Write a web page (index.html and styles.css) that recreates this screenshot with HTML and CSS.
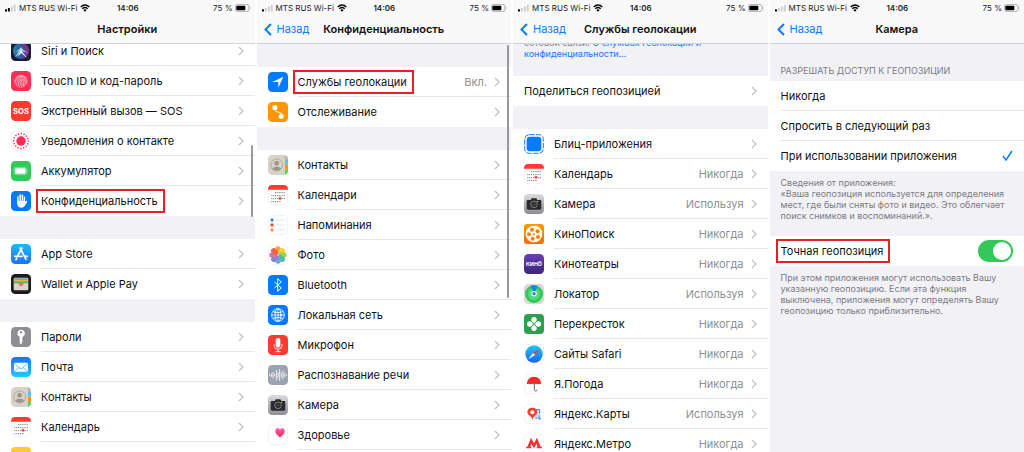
FILE: index.html
```
<!DOCTYPE html>
<html lang="ru">
<head>
  <meta charset="UTF-8">
  <meta name="viewport" content="width=device-width, initial-scale=1.0">
  <title>Службы геолокации</title>
  <link rel="stylesheet" href="styles.css">
</head>
<body>
  <svg class="sprite" aria-hidden="true">
    <defs>
      <linearGradient id="g-blue" x1="0" y1="0" x2="0" y2="1"><stop offset="0" stop-color="#1e6ff2"/><stop offset="1" stop-color="#19d0fb"/></linearGradient>
      <linearGradient id="g-store" x1="0" y1="0" x2="0" y2="1"><stop offset="0" stop-color="#19bdfb"/><stop offset="1" stop-color="#1d72f1"/></linearGradient>
      <linearGradient id="g-grey" x1="0" y1="0" x2="0" y2="1"><stop offset="0" stop-color="#dcdce0"/><stop offset="1" stop-color="#8d8d92"/></linearGradient>
      <linearGradient id="g-orange" x1="0" y1="0" x2="0" y2="1"><stop offset="0" stop-color="#ff9a00"/><stop offset="1" stop-color="#ff6a0a"/></linearGradient>
      <linearGradient id="g-violet" x1="0" y1="0" x2="0" y2="1"><stop offset="0" stop-color="#6a3fb5"/><stop offset="1" stop-color="#3f2378"/></linearGradient>
      <linearGradient id="g-heart" x1="0" y1="0" x2="0" y2="1"><stop offset="0" stop-color="#fb5aa8"/><stop offset="1" stop-color="#fb2a55"/></linearGradient>
      <linearGradient id="g-safari" x1="0" y1="0" x2="0" y2="1"><stop offset="0" stop-color="#1fc8fb"/><stop offset="1" stop-color="#1b63ea"/></linearGradient>
      <linearGradient id="g-siri" x1="0" y1="0" x2="1" y2="0"><stop offset="0" stop-color="#2ec4d8"/><stop offset=".5" stop-color="#4a6be0"/><stop offset="1" stop-color="#d43a9a"/></linearGradient>
      <clipPath id="tile"><rect width="60" height="60" rx="13"/></clipPath>
    </defs>

    <symbol id="chevron" viewBox="0 0 6 10"><path d="M1 1l4 4-4 4" fill="none" stroke="#c4c4c7" stroke-width="1.4"/></symbol>
    <symbol id="back" viewBox="0 0 8 13"><path d="M7 1L1.500 6.500 7 12" fill="none" stroke="#0a7aff" stroke-width="2"/></symbol>
    <symbol id="check" viewBox="0 0 11 11"><path d="M1 6l3 4 6-9" fill="none" stroke="#0a7aff" stroke-width="1.500"/></symbol>

    <symbol id="signal-2" viewBox="0 0 34 24">
      <rect y="16" width="6" height="7" rx="1"/><rect x="9" y="12" width="6" height="11" rx="1"/>
      <g fill="#cfcfd2"><rect x="18" y="7" width="6" height="16" rx="1"/><rect x="27" y="2" width="6" height="21" rx="1"/></g>
    </symbol>
    <symbol id="signal-1" viewBox="0 0 34 24">
      <rect y="16" width="6" height="7" rx="1"/>
      <g fill="#cfcfd2"><rect x="9" y="12" width="6" height="11" rx="1"/><rect x="18" y="7" width="6" height="16" rx="1"/><rect x="27" y="2" width="6" height="21" rx="1"/></g>
    </symbol>
    <symbol id="wifi" viewBox="0 0 30 24">
      <g fill="none" stroke="#000" stroke-width="4"><path d="M2 9q13-12 26 0M7 14q8-7 16 0"/></g><path d="M10 18q5-4 10 0l-5 5z"/>
    </symbol>
    <symbol id="battery" viewBox="0 0 48 24">
      <rect x="1" y="2" width="41" height="20" rx="5" fill="none" stroke="#8e8e93" stroke-width="2"/>
      <rect x="4" y="5" width="27" height="14" rx="3"/><path d="M44 8q4 4 0 8z" fill="#8e8e93"/>
    </symbol>

    <symbol id="siri" viewBox="0 0 60 60">
      <rect width="60" height="60" rx="13" fill="#1b1c3a"/>
      <circle cx="30" cy="30" r="24" fill="url(#g-siri)" opacity=".65"/>
      <path d="M7 34q14-3 23-16 9 14 23 17-14-1-23-4-7 10-18 18 7-10 10-18-7 0-15 3z" fill="#8ff0ee" opacity=".8"/>
      <path d="M30 20l3 11 15 20-17-14-12 10 8-14z" fill="#fff" opacity=".85"/>
    </symbol>
    <symbol id="touch" viewBox="0 0 60 60">
      <rect width="60" height="60" rx="13" fill="#ff2d55"/>
      <g fill="none" stroke="#fff" stroke-width="2" stroke-linecap="round" opacity=".85">
        <path d="M15 20q15-15 30 0M11 29q3-12 19-13 16 1 19 14M12 37q0-16 18-17 16 1 18 17M16 43q3-5 2-9 1-9 12-10 12 1 13 11 0 6-2 10M20 47q4-7 3-12 1-7 7-7 7 0 8 7 1 7-2 13M25 49q4-8 3-13 0-4 2-4 3 0 3 4 0 7-2 14"/>
      </g>
    </symbol>
    <symbol id="sos" viewBox="0 0 60 60">
      <rect width="60" height="60" rx="13" fill="#ff3b30"/>
      <text x="30" y="39" class="glyph-text glyph-sos">SOS</text>
    </symbol>
    <symbol id="exposure" viewBox="0 0 60 60">
      <rect x="1" y="1" width="58" height="58" rx="13" fill="#fff" stroke="#e9e9ec" stroke-width="2"/>
      <circle cx="30" cy="30" r="14" fill="#ff2d55"/>
      <circle cx="30" cy="30" r="22" fill="none" stroke="#ff2d55" stroke-width="5" stroke-linecap="round" stroke-dasharray="0 8.640"/>
    </symbol>
    <symbol id="accumulator" viewBox="0 0 60 60">
      <rect width="60" height="60" rx="13" fill="#34c759"/>
      <rect x="9" y="19" width="38" height="22" rx="6" fill="none" stroke="#a9e8b9" stroke-width="2"/>
      <rect x="12" y="22" width="32" height="16" rx="3" fill="#fff"/><path d="M49 26q5 4 0 8z" fill="#a9e8b9"/>
    </symbol>
    <symbol id="hand" viewBox="0 0 60 60">
      <rect width="60" height="60" rx="13" fill="#007aff"/>
      <g fill="none" stroke="#fff" stroke-width="5" stroke-linecap="round"><path d="M21 35V18M27.500 32V12M34 32V13M40 34V19M40 42l6-10"/></g>
      <path d="M18.500 29h24v9q-1 12-12 12-12 0-12-13z" fill="#fff"/>
      <path d="M24.300 18v12M30.800 14v16M37 18v12" stroke="#007aff" stroke-width="1.500"/>
    </symbol>
    <symbol id="appstore" viewBox="0 0 60 60">
      <rect width="60" height="60" rx="13" fill="url(#g-store)"/>
      <g fill="none" stroke="#fff" stroke-width="5" stroke-linecap="round"><path d="M33 12L20 35M27 12l18 34M11 37h22M42 37h7M17 43l-2 4"/></g>
    </symbol>
    <symbol id="wallet" viewBox="0 0 60 60">
      <rect width="60" height="60" rx="13" fill="#1c1c1e"/>
      <rect x="8" y="11" width="44" height="38" rx="4" fill="#d9d5c8"/>
      <path d="M10 13h40v5H10z" fill="#4b9ed0"/><path d="M9 17h42v6H9z" fill="#e6b73a"/><path d="M9 22h42v6H9z" fill="#58b36a"/>
      <path d="M22 28h16v3q-2 0-3 3-5 6-10 0-1-3-3-3z" fill="#ee6a5c"/>
    </symbol>
    <symbol id="key" viewBox="0 0 60 60">
      <rect width="60" height="60" rx="13" fill="#8e8e93"/>
      <path fill="#fff" fill-rule="evenodd" d="M30 8a11 11 0 0 1 5 21v4l-3 3 4 4-4 4 2 3-5 5-3-4V29A11 11 0 0 1 30 8zm0 4a3 3 0 1 0 0 7 3 3 0 0 0 0-7z"/>
    </symbol>
    <symbol id="mail" viewBox="0 0 60 60">
      <rect width="60" height="60" rx="13" fill="url(#g-blue)"/>
      <rect x="9" y="17" width="42" height="27" rx="4" fill="#fff"/>
      <path d="M10 19l17 15q3 2 6 0l17-15M10 43l15-12M50 43L35 31" fill="none" stroke="#1f9bf6" stroke-width="2"/>
    </symbol>
    <symbol id="contacts" viewBox="0 0 60 60">
      <g clip-path="url(#tile)">
        <rect width="60" height="60" fill="#d6d2c6"/>
        <path d="M51 0h9v15h-9z" fill="#b9b6ab"/><path d="M51 15h9v14h-9z" fill="#5ac1fa"/><path d="M51 29h9v15h-9z" fill="#ff9500"/><path d="M51 44h9v16h-9z" fill="#4cd964"/>
      </g>
      <circle cx="26" cy="30" r="18" fill="none" stroke="#9b978d" stroke-width="2"/>
      <circle cx="26" cy="25" r="7" fill="#9b978d"/><path d="M13 42q2-7 13-7t13 7q-13 11-26 0z" fill="#9b978d"/>
    </symbol>
    <symbol id="calendar" viewBox="0 0 60 60">
      <rect x="1" y="1" width="58" height="58" rx="13" fill="#fff" stroke="#ececef" stroke-width="2"/>
      <path d="M0 14v-1Q0 0 13 0h34q13 0 13 13v1z" fill="#ff3b30"/>
      <path d="M21 23h30M10 32h41M10 41h41M10 50h29" stroke="#555" stroke-width="2.500" stroke-dasharray="3 2.500"/>
      <circle cx="36" cy="40" r="4" fill="#ff3b30"/>
    </symbol>
    <symbol id="notes" viewBox="0 0 60 60">
      <rect width="60" height="60" rx="13" fill="#fff"/><path d="M0 18v-5Q0 0 13 0h34q13 0 13 13v5z" fill="#fccb2f"/>
    </symbol>

    <symbol id="location" viewBox="0 0 60 60">
      <rect width="60" height="60" rx="13" fill="#007aff"/><path d="M46 14L31 47V30H13z" fill="#fff"/>
    </symbol>
    <symbol id="tracking" viewBox="0 0 60 60">
      <rect width="60" height="60" rx="13" fill="#ff9500"/>
      <path d="M20 18l1 7q1 3 5 4l10 3q4 1 4 5v5" fill="none" stroke="#fff" stroke-width="3"/>
      <rect x="13" y="10" width="15" height="14" rx="5" fill="#fff"/><rect x="32" y="36" width="15" height="14" rx="5" fill="#fff"/>
    </symbol>
    <symbol id="reminders" viewBox="0 0 60 60">
      <rect x="1" y="1" width="58" height="58" rx="13" fill="#fff" stroke="#ececef" stroke-width="2"/>
      <circle cx="12" cy="15" r="5" fill="#1e88f7"/><circle cx="12" cy="30" r="5" fill="#f5463b"/><circle cx="12" cy="45" r="5" fill="#fd9a27"/>
      <path d="M23 15h30M23 30h30M23 45h30" stroke="#dcdce0" stroke-width="2"/>
    </symbol>
    <symbol id="photos" viewBox="0 0 60 60">
      <rect x="1" y="1" width="58" height="58" rx="13" fill="#fff" stroke="#ececef" stroke-width="2"/>
      <g opacity=".9">
        <rect x="22" y="4" width="16" height="24" rx="8" fill="#fb9a26"/>
        <rect x="22" y="4" width="16" height="24" rx="8" fill="#f2d313" transform="rotate(45 30 30)"/>
        <rect x="22" y="4" width="16" height="24" rx="8" fill="#9ccb3b" transform="rotate(90 30 30)"/>
        <rect x="22" y="4" width="16" height="24" rx="8" fill="#3fb98a" transform="rotate(135 30 30)"/>
        <rect x="22" y="4" width="16" height="24" rx="8" fill="#5d9fe0" transform="rotate(180 30 30)"/>
        <rect x="22" y="4" width="16" height="24" rx="8" fill="#8173c9" transform="rotate(225 30 30)"/>
        <rect x="22" y="4" width="16" height="24" rx="8" fill="#bf6bb0" transform="rotate(270 30 30)"/>
        <rect x="22" y="4" width="16" height="24" rx="8" fill="#ee5340" transform="rotate(315 30 30)"/>
      </g>
    </symbol>
    <symbol id="bluetooth" viewBox="0 0 60 60">
      <rect width="60" height="60" rx="13" fill="#007aff"/>
      <path d="M19 21l21 18-11 10V11l11 10-21 18" fill="none" stroke="#fff" stroke-width="3"/>
    </symbol>
    <symbol id="globe" viewBox="0 0 60 60">
      <rect width="60" height="60" rx="13" fill="#007aff"/>
      <g fill="none" stroke="#fff" stroke-width="2.500"><circle cx="30" cy="30" r="19"/><ellipse cx="30" cy="30" rx="9" ry="19"/><path d="M30 11v38M11 30h38M15 20q15 7 30 0M15 40q15-7 30 0"/></g>
      <g fill="#fff"><circle cx="22" cy="22" r="3"/><circle cx="39" cy="30" r="3"/><circle cx="23" cy="38" r="3"/></g>
    </symbol>
    <symbol id="mic" viewBox="0 0 60 60">
      <rect width="60" height="60" rx="13" fill="#ff3b30"/>
      <rect x="23" y="9" width="14" height="29" rx="7" fill="#fff"/>
      <path d="M18 27v5q1 11 12 11t12-11v-5M30 43v7M22 50h16" fill="none" stroke="#fff" stroke-width="2.500"/>
    </symbol>
    <symbol id="speech" viewBox="0 0 60 60">
      <rect width="60" height="60" rx="13" fill="#9ba3b0"/>
      <path d="M5 29v3M10 26v9M15 22v17M20 28v5M25 16v29M30 22v17M35 13v34M40 24v12M45 18v24M50 25v10M55 29v3" stroke="#fff" stroke-width="2.500" stroke-linecap="round"/>
    </symbol>
    <symbol id="camera" viewBox="0 0 60 60">
      <rect width="60" height="60" rx="13" fill="url(#g-grey)"/>
      <path d="M11 18h9l3-5h14l3 5h9q3 0 3 3v22q0 4-4 4H12q-4 0-4-4V21q0-3 3-3z" fill="#2b2b2d"/>
      <circle cx="30" cy="31" r="10" fill="none" stroke="#a2a2a6" stroke-width="2"/><circle cx="30" cy="31" r="6" fill="#3c3c40"/><circle cx="41" cy="22" r="2" fill="#f5c518"/>
    </symbol>
    <symbol id="health" viewBox="0 0 60 60">
      <rect x="1" y="1" width="58" height="58" rx="13" fill="#fff" stroke="#e9e9ec" stroke-width="2"/>
      <path d="M36 37Q22 28 22 18q0-8 7-8 5 0 7 4 2-4 7-4 7 0 7 8 0 10-14 19z" fill="url(#g-heart)"/>
    </symbol>

    <symbol id="appclips" viewBox="0 0 60 60">
      <rect x="2" y="2" width="56" height="56" rx="14" fill="#fff" stroke="#0a7aff" stroke-width="3" stroke-dasharray="16 4"/>
      <rect x="8" y="8" width="44" height="44" rx="9" fill="#0a7aff"/>
    </symbol>
    <symbol id="kinopoisk" viewBox="0 0 60 60">
      <rect width="60" height="60" rx="10" fill="url(#g-orange)"/><circle cx="30" cy="30" r="25" fill="#fff"/>
      <g fill="#ff7d05"><circle cx="24" cy="17" r="6"/><circle cx="41" cy="22" r="6"/><circle cx="42" cy="39" r="6"/><circle cx="26" cy="44" r="6"/><circle cx="15" cy="31" r="6"/><circle cx="30" cy="31" r="3"/></g>
    </symbol>
    <symbol id="kino" viewBox="0 0 60 60">
      <rect width="60" height="60" rx="13" fill="url(#g-violet)"/>
      <text x="30" y="37" class="glyph-text glyph-kino">КИНО</text><path d="M44 23h8" stroke="#fff" stroke-width="2"/>
    </symbol>
    <symbol id="findmy" viewBox="0 0 60 60">
      <rect width="60" height="60" rx="13" fill="#d7d9d8"/><circle cx="30" cy="30" r="27" fill="#34c85a"/><circle cx="30" cy="30" r="18" fill="#55dc72"/>
      <path d="M19 6q11-5 22 0L31 30z" fill="#1a84e8"/><circle cx="30" cy="29" r="8" fill="#fff"/><circle cx="30" cy="29" r="5" fill="#157efb"/>
    </symbol>
    <symbol id="perek" viewBox="0 0 60 60">
      <rect width="60" height="60" rx="11" fill="#2f9e4f"/>
      <path d="M18 30h24M30 18v24" stroke="#fff" stroke-width="4"/>
      <g fill="#fff"><circle cx="30" cy="17" r="8"/><circle cx="43" cy="30" r="8"/><circle cx="30" cy="43" r="8"/><circle cx="17" cy="30" r="8"/></g>
      <path d="M30 26l4 4-4 4-4-4z" fill="#2f9e4f"/>
    </symbol>
    <symbol id="safari" viewBox="0 0 60 60">
      <rect x="1" y="1" width="58" height="58" rx="13" fill="#fff" stroke="#ececef" stroke-width="2"/>
      <circle cx="30" cy="30" r="26" fill="url(#g-safari)"/>
      <path d="M47 14L27 27l6 6z" fill="#ff3b30"/><path d="M13 46l20-13-6-6z" fill="#fff"/>
    </symbol>
    <symbol id="weather" viewBox="0 0 60 60">
      <rect x="1" y="1" width="58" height="58" rx="13" fill="#fff" stroke="#ececef" stroke-width="2"/>
      <path d="M31 25v22q0 4 4 4t4-4" fill="none" stroke="#4a4a4c" stroke-width="2.500"/>
      <path d="M8 31Q10 8 30 8t22 23q-5-4-10 0-6-4-12 0-6-4-12 0-5-4-10 0z" fill="#ee2b2b"/>
    </symbol>
    <symbol id="maps" viewBox="0 0 60 60">
      <rect x="1" y="1" width="58" height="58" rx="13" fill="#fff" stroke="#ececef" stroke-width="2"/>
      <path d="M34 16h13v10l3 3v16H38l-8-6z" fill="#cfe6fb"/><path d="M35 17h12v12M34 42h6M45 34v11h6" fill="none" stroke="#2f80ed" stroke-width="3"/>
      <path d="M26 48q-2-9-8-12-8-5-8-11 0-14 15-14t15 14q0 6-8 11-5 3-6 12z" fill="#f5402f"/><circle cx="25" cy="25" r="6" fill="#fff"/>
    </symbol>
    <symbol id="metro" viewBox="0 0 60 60">
      <rect x="1" y="1" width="58" height="58" rx="13" fill="#fff" stroke="#ececef" stroke-width="2"/>
      <path d="M21 11l9 17 9-17 11 27h4v5H38v-5h3l-3-9-8 14-8-14-3 9h3v5H6v-5h4z" fill="#ee3338"/>
    </symbol>
  </svg>

  <main class="screens">
    <section class="screen">
      <header class="topbar">
        <div class="status">
          <span class="carrier"><svg class="signal"><use href="#signal-2"/></svg>MTS RUS Wi-Fi<svg class="wifi"><use href="#wifi"/></svg></span>
          <time>14:06</time>
          <span class="charge">75 %<svg class="battery"><use href="#battery"/></svg></span>
        </div>
        <div class="nav"><h1>Настройки</h1></div>
      </header>
      <div class="content scrolled">
        <nav class="group">
          <a class="row" href="#"><svg class="icon"><use href="#siri"/></svg><span class="body"><span class="label">Siri и Поиск</span><svg class="chevron"><use href="#chevron"/></svg></span></a>
          <a class="row" href="#"><svg class="icon"><use href="#touch"/></svg><span class="body"><span class="label">Touch ID и код-пароль</span><svg class="chevron"><use href="#chevron"/></svg></span></a>
          <a class="row" href="#"><svg class="icon"><use href="#sos"/></svg><span class="body"><span class="label">Экстренный вызов — SOS</span><svg class="chevron"><use href="#chevron"/></svg></span></a>
          <a class="row" href="#"><svg class="icon"><use href="#exposure"/></svg><span class="body"><span class="label">Уведомления о контакте</span><svg class="chevron"><use href="#chevron"/></svg></span></a>
          <a class="row" href="#"><svg class="icon"><use href="#accumulator"/></svg><span class="body"><span class="label">Аккумулятор</span><svg class="chevron"><use href="#chevron"/></svg></span></a>
          <a class="row" href="#"><svg class="icon"><use href="#hand"/></svg><span class="body"><span class="label marked">Конфиденциальность</span><svg class="chevron"><use href="#chevron"/></svg></span></a>
        </nav>
        <nav class="group">
          <a class="row" href="#"><svg class="icon"><use href="#appstore"/></svg><span class="body"><span class="label">App Store</span><svg class="chevron"><use href="#chevron"/></svg></span></a>
          <a class="row" href="#"><svg class="icon"><use href="#wallet"/></svg><span class="body"><span class="label">Wallet и Apple Pay</span><svg class="chevron"><use href="#chevron"/></svg></span></a>
        </nav>
        <nav class="group">
          <a class="row" href="#"><svg class="icon"><use href="#key"/></svg><span class="body"><span class="label">Пароли</span><svg class="chevron"><use href="#chevron"/></svg></span></a>
          <a class="row" href="#"><svg class="icon"><use href="#mail"/></svg><span class="body"><span class="label">Почта</span><svg class="chevron"><use href="#chevron"/></svg></span></a>
          <a class="row" href="#"><svg class="icon"><use href="#contacts"/></svg><span class="body"><span class="label">Контакты</span><svg class="chevron"><use href="#chevron"/></svg></span></a>
          <a class="row" href="#"><svg class="icon"><use href="#calendar"/></svg><span class="body"><span class="label">Календарь</span><svg class="chevron"><use href="#chevron"/></svg></span></a>
          <a class="row" href="#"><svg class="icon"><use href="#notes"/></svg><span class="body"><span class="label">Заметки</span><svg class="chevron"><use href="#chevron"/></svg></span></a>
        </nav>
      </div>
      <div class="scrollbar scrollbar-middle"></div>
    </section>

    <section class="screen">
      <header class="topbar">
        <div class="status">
          <span class="carrier"><svg class="signal"><use href="#signal-1"/></svg>MTS RUS Wi-Fi<svg class="wifi"><use href="#wifi"/></svg></span>
          <time>14:06</time>
          <span class="charge">75 %<svg class="battery"><use href="#battery"/></svg></span>
        </div>
        <div class="nav"><button class="back" type="button"><svg><use href="#back"/></svg>Назад</button><h1>Конфиденциальность</h1></div>
      </header>
      <div class="content spaced">
        <nav class="group">
          <a class="row" href="#"><svg class="icon"><use href="#location"/></svg><span class="body"><span class="label marked">Службы геолокации</span><span class="value">Вкл.</span><svg class="chevron"><use href="#chevron"/></svg></span></a>
          <a class="row" href="#"><svg class="icon"><use href="#tracking"/></svg><span class="body"><span class="label">Отслеживание</span><svg class="chevron"><use href="#chevron"/></svg></span></a>
        </nav>
        <nav class="group">
          <a class="row" href="#"><svg class="icon"><use href="#contacts"/></svg><span class="body"><span class="label">Контакты</span><svg class="chevron"><use href="#chevron"/></svg></span></a>
          <a class="row" href="#"><svg class="icon"><use href="#calendar"/></svg><span class="body"><span class="label">Календари</span><svg class="chevron"><use href="#chevron"/></svg></span></a>
          <a class="row" href="#"><svg class="icon"><use href="#reminders"/></svg><span class="body"><span class="label">Напоминания</span><svg class="chevron"><use href="#chevron"/></svg></span></a>
          <a class="row" href="#"><svg class="icon"><use href="#photos"/></svg><span class="body"><span class="label">Фото</span><svg class="chevron"><use href="#chevron"/></svg></span></a>
          <a class="row" href="#"><svg class="icon"><use href="#bluetooth"/></svg><span class="body"><span class="label">Bluetooth</span><svg class="chevron"><use href="#chevron"/></svg></span></a>
          <a class="row" href="#"><svg class="icon"><use href="#globe"/></svg><span class="body"><span class="label">Локальная сеть</span><svg class="chevron"><use href="#chevron"/></svg></span></a>
          <a class="row" href="#"><svg class="icon"><use href="#mic"/></svg><span class="body"><span class="label">Микрофон</span><svg class="chevron"><use href="#chevron"/></svg></span></a>
          <a class="row" href="#"><svg class="icon"><use href="#speech"/></svg><span class="body"><span class="label">Распознавание речи</span><svg class="chevron"><use href="#chevron"/></svg></span></a>
          <a class="row" href="#"><svg class="icon"><use href="#camera"/></svg><span class="body"><span class="label">Камера</span><svg class="chevron"><use href="#chevron"/></svg></span></a>
          <a class="row" href="#"><svg class="icon"><use href="#health"/></svg><span class="body"><span class="label">Здоровье</span><svg class="chevron"><use href="#chevron"/></svg></span></a>
          <a class="row" href="#"><span class="body"></span></a>
        </nav>
      </div>
      <div class="scrollbar scrollbar-top"></div>
    </section>

    <section class="screen">
      <header class="topbar">
        <div class="status">
          <span class="carrier"><svg class="signal"><use href="#signal-1"/></svg>MTS RUS Wi-Fi<svg class="wifi"><use href="#wifi"/></svg></span>
          <time>14:06</time>
          <span class="charge">75 %<svg class="battery"><use href="#battery"/></svg></span>
        </div>
        <div class="nav"><button class="back" type="button"><svg><use href="#back"/></svg>Назад</button><h1>Службы геолокации</h1></div>
      </header>
      <div class="content scrolled">
        <p class="note note-cut">сотовой связи. <a href="#">О службах геолокации и<br>конфиденциальности…</a></p>
        <nav class="group">
          <a class="row" href="#"><span class="body"><span class="label">Поделиться геопозицией</span><svg class="chevron"><use href="#chevron"/></svg></span></a>
        </nav>
        <nav class="group">
          <a class="row" href="#"><svg class="icon"><use href="#appclips"/></svg><span class="body"><span class="label">Блиц-приложения</span><svg class="chevron"><use href="#chevron"/></svg></span></a>
          <a class="row" href="#"><svg class="icon"><use href="#calendar"/></svg><span class="body"><span class="label">Календарь</span><span class="value">Никогда</span><svg class="chevron"><use href="#chevron"/></svg></span></a>
          <a class="row" href="#"><svg class="icon"><use href="#camera"/></svg><span class="body"><span class="label">Камера</span><span class="value">Используя</span><svg class="chevron"><use href="#chevron"/></svg></span></a>
          <a class="row" href="#"><svg class="icon"><use href="#kinopoisk"/></svg><span class="body"><span class="label">КиноПоиск</span><span class="value">Никогда</span><svg class="chevron"><use href="#chevron"/></svg></span></a>
          <a class="row" href="#"><svg class="icon"><use href="#kino"/></svg><span class="body"><span class="label">Кинотеатры</span><span class="value">Никогда</span><svg class="chevron"><use href="#chevron"/></svg></span></a>
          <a class="row" href="#"><svg class="icon"><use href="#findmy"/></svg><span class="body"><span class="label">Локатор</span><span class="value">Используя</span><svg class="chevron"><use href="#chevron"/></svg></span></a>
          <a class="row" href="#"><svg class="icon"><use href="#perek"/></svg><span class="body"><span class="label">Перекресток</span><span class="value">Никогда</span><svg class="chevron"><use href="#chevron"/></svg></span></a>
          <a class="row" href="#"><svg class="icon"><use href="#safari"/></svg><span class="body"><span class="label">Сайты Safari</span><span class="value">Никогда</span><svg class="chevron"><use href="#chevron"/></svg></span></a>
          <a class="row" href="#"><svg class="icon"><use href="#weather"/></svg><span class="body"><span class="label">Я.Погода</span><span class="value">Никогда</span><svg class="chevron"><use href="#chevron"/></svg></span></a>
          <a class="row" href="#"><svg class="icon"><use href="#maps"/></svg><span class="body"><span class="label">Яндекс.Карты</span><span class="value">Используя</span><svg class="chevron"><use href="#chevron"/></svg></span></a>
          <a class="row" href="#"><svg class="icon"><use href="#metro"/></svg><span class="body"><span class="label">Яндекс.Метро</span><span class="value">Никогда</span><svg class="chevron"><use href="#chevron"/></svg></span></a>
        </nav>
      </div>
    </section>

    <section class="screen">
      <header class="topbar">
        <div class="status">
          <span class="carrier"><svg class="signal"><use href="#signal-1"/></svg>MTS RUS Wi-Fi<svg class="wifi"><use href="#wifi"/></svg></span>
          <time>14:06</time>
          <span class="charge">75 %<svg class="battery"><use href="#battery"/></svg></span>
        </div>
        <div class="nav"><button class="back" type="button"><svg><use href="#back"/></svg>Назад</button><h1>Камера</h1></div>
      </header>
      <div class="content">
        <h2 class="caption">РАЗРЕШАТЬ ДОСТУП К ГЕОПОЗИЦИИ</h2>
        <div class="group" role="radiogroup">
          <label class="row"><span class="body"><span class="label">Никогда</span><input class="choice" type="radio" name="access"><svg class="check"><use href="#check"/></svg></span></label>
          <label class="row"><span class="body"><span class="label">Спросить в следующий раз</span><input class="choice" type="radio" name="access"><svg class="check"><use href="#check"/></svg></span></label>
          <label class="row"><span class="body"><span class="label">При использовании приложения</span><input class="choice" type="radio" name="access" checked><svg class="check"><use href="#check"/></svg></span></label>
        </div>
        <p class="note">Сведения от приложения:<br>«Ваша геопозиция используется для определения мест, где были сняты фото и видео. Это облегчает поиск снимков и воспоминаний.».</p>
        <div class="group">
          <label class="row"><span class="body"><span class="label marked">Точная геопозиция</span><input class="switch" type="checkbox" checked></span></label>
        </div>
        <p class="note">При этом приложения могут использовать Вашу указанную геопозицию. Если эта функция выключена, приложения могут определять Вашу геопозицию только приблизительно.</p>
      </div>
    </section>
  </main>
</body>
</html>
```
FILE: styles.css
```
* {
  box-sizing: border-box;
}
body {
  margin: 0;
  background: #fff;
  color: #111;
  font-family: Inter, "Noto Sans", sans-serif;
  font-size: 11px;
}
.sprite {
  position: absolute;
  width: 0;
  height: 0;
}
.screens {
  display: grid;
  grid-template-columns: repeat(4, 1fr);
  gap: 2px;
  height: 100vh;
}
.screen {
  position: relative;
  display: flex;
  flex-direction: column;
  min-width: 0;
  overflow: hidden;
  background: #f1f1f6;
}

/* status bar and title */
.topbar {
  position: relative;
  z-index: 1;
  flex: none;
  background: #f9f9fa;
  border-bottom: 1px solid #d3d3d7;
}
.status {
  display: grid;
  grid-template-columns: 1fr auto 1fr;
  align-items: center;
  height: 15px;
  padding: 0 4px 0 5px;
  font-size: 8px;
  color: #222;
  white-space: nowrap;
}
.status time {
  font-weight: 600;
}
.carrier,
.charge {
  display: flex;
  align-items: center;
  gap: 3px;
}
.charge {
  justify-content: flex-end;
  gap: 2px;
}
.signal {
  width: 11px;
  height: 8px;
}
.wifi {
  width: 10px;
  height: 8px;
}
.battery {
  width: 16px;
  height: 8px;
}
.nav {
  display: grid;
  grid-template-columns: 1fr auto 1fr;
  align-items: center;
  height: 28px;
}
.nav h1 {
  grid-column: 2;
  margin: 0;
  font-size: 11px;
  font-weight: 600;
}
.back {
  display: flex;
  align-items: center;
  justify-self: start;
  gap: 5px;
  padding: 0 0 0 7px;
  border: 0;
  background: none;
  color: #0a7aff;
  font: inherit;
}
.back svg {
  width: 8px;
  height: 13px;
}

/* lists */
.content {
  display: flex;
  flex-direction: column;
}
.scrolled {
  margin-top: -8px;
}
.spaced {
  padding-top: 23px;
}
.group {
  background: #fff;
}
.group + .group {
  margin-top: 23px;
}
.row {
  display: flex;
  align-items: center;
  gap: 10px;
  height: 30px;
  padding-left: 11px;
  color: inherit;
  text-decoration: none;
}
.icon {
  flex: none;
  width: 20px;
  height: 20px;
}
.body {
  display: flex;
  flex: 1;
  align-items: center;
  height: 100%;
  padding-right: 11px;
  border-bottom: 1px solid #e7e7ea;
  white-space: nowrap;
}
.row:last-child .body {
  border-bottom-color: transparent;
}
.label {
  position: relative;
  margin-right: auto;
}
.marked::after {
  content: "";
  position: absolute;
  inset: -5px -7px -5px -5px;
  border: 2px solid #ee1c25;
}
.value {
  margin-right: 7px;
  color: #8e8e93;
}
.chevron {
  width: 6px;
  height: 10px;
}

/* texts between the groups */
.caption,
.note {
  margin: 0;
  padding: 6px 11px 15px;
  color: #7c7c82;
  font-size: 9px;
  font-weight: 400;
  line-height: 11px;
}
.caption {
  padding-top: 21px;
  padding-bottom: 5px;
}
.note a {
  color: #0a7aff;
  text-decoration: none;
}
.note-cut {
  padding-top: 1px;
  padding-bottom: 17px;
}

/* controls */
.choice {
  appearance: none;
  width: 0;
  height: 0;
  margin: 0;
}
.check {
  display: none;
  width: 11px;
  height: 11px;
}
.choice:checked + .check {
  display: block;
}
.switch {
  appearance: none;
  display: flex;
  justify-content: flex-end;
  width: 35px;
  height: 22px;
  margin: 0;
  padding: 2px;
  border-radius: 11px;
  background: #34c759;
}
.switch::before {
  content: "";
  width: 18px;
  height: 18px;
  border-radius: 50%;
  background: #fff;
}

/* lettering inside the icons */
.glyph-text {
  fill: #fff;
  font-weight: 700;
  text-anchor: middle;
}
.glyph-sos {
  font-size: 23px;
}
.glyph-kino {
  font-size: 16px;
}

.scrollbar {
  position: absolute;
  right: 2px;
  z-index: 2;
  width: 2px;
  border-radius: 1px;
  background: #98989d;
}
.scrollbar-middle {
  top: 32%;
  height: 16%;
}
.scrollbar-top {
  top: 10%;
  height: 56%;
}
```
